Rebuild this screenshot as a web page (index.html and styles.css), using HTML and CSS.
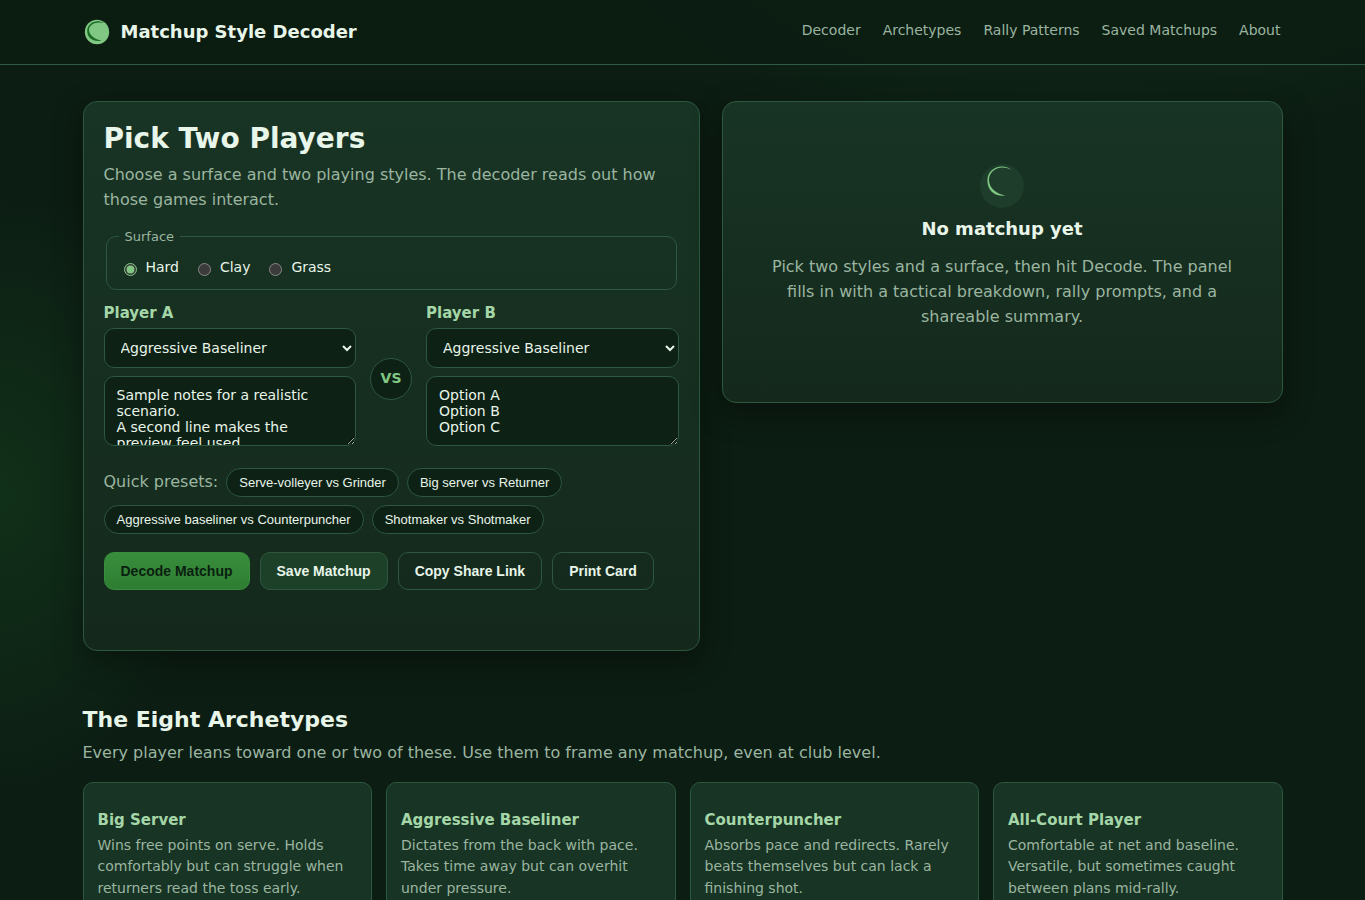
FILE: index.html
```
<!DOCTYPE html>
<html lang="en">
<head>
    <meta charset="UTF-8">
    <meta name="viewport" content="width=device-width, initial-scale=1.0">
    <title>Matchup Style Decoder</title>
    <link rel="stylesheet" href="styles.css">
</head>
<body>

    <header class="site-header">
        <div class="wrap header-inner">
            <a class="brand" href="#">
                <svg class="logo" viewBox="0 0 28 28" aria-hidden="true">
                    <circle cx="14" cy="14" r="12.2" fill="#81c784"/>
                    <path d="M21 5C13 0.500 4.200 5.500 4.200 13C4.200 19.500 10 24.500 18.500 22.700C12 21.500 6.500 17.500 6 12.500C5.600 7 12.500 3 21 5Z" fill="#1b6b25"/>
                </svg>
                <span>Matchup Style Decoder</span>
            </a>
            <nav class="nav">
                <a href="#decoder">Decoder</a>
                <a href="#archetypes">Archetypes</a>
                <a href="#patterns">Rally Patterns</a>
                <a href="#saved">Saved Matchups</a>
                <a href="#about">About</a>
            </nav>
        </div>
    </header>

    <main class="wrap">
        <section class="decoder" id="decoder">
            <div class="card picker">
                <h1>Pick Two Players</h1>
                <p class="muted">Choose a surface and two playing styles. The decoder reads out how those games interact.</p>

                <fieldset class="surface">
                    <legend>Surface</legend>
                    <label><input type="radio" name="surface" checked> Hard</label>
                    <label><input type="radio" name="surface"> Clay</label>
                    <label><input type="radio" name="surface"> Grass</label>
                </fieldset>

                <div class="players">
                    <div class="player">
                        <label for="styleA">Player A</label>
                        <select id="styleA">
                            <option>Aggressive Baseliner</option>
                            <option>Big Server</option>
                            <option>Counterpuncher</option>
                            <option>All-Court Player</option>
                        </select>
                        <textarea id="notesA">Sample notes for a realistic scenario.
A second line makes the preview feel used.</textarea>
                    </div>
                    <div class="vs">VS</div>
                    <div class="player">
                        <label for="styleB">Player B</label>
                        <select id="styleB">
                            <option>Aggressive Baseliner</option>
                            <option>Big Server</option>
                            <option>Counterpuncher</option>
                            <option>All-Court Player</option>
                        </select>
                        <textarea id="notesB">Option A
Option B
Option C</textarea>
                    </div>
                </div>

                <div class="presets">
                    <span class="muted">Quick presets:</span>
                    <button class="chip">Serve-volleyer vs Grinder</button>
                    <button class="chip">Big server vs Returner</button>
                    <button class="chip">Aggressive baseliner vs Counterpuncher</button>
                    <button class="chip">Shotmaker vs Shotmaker</button>
                </div>

                <div class="actions">
                    <button class="btn primary">Decode Matchup</button>
                    <button class="btn secondary">Save Matchup</button>
                    <button class="btn">Copy Share Link</button>
                    <button class="btn">Print Card</button>
                </div>
            </div>

            <div class="card empty">
                <svg class="empty-icon" viewBox="0 0 48 48" aria-hidden="true">
                    <circle cx="24" cy="26" r="22" fill="#1f3d2b"/>
                    <path d="M33.500 10C24 2.500 9.400 8 9.400 20.500C9.400 30 16.500 37.500 27.500 35.300C19 34 11.500 29 11 20.500C10.500 10.500 22 3.500 33.500 10Z" fill="#81c784"/>
                </svg>
                <h3>No matchup yet</h3>
                <p class="muted">Pick two styles and a surface, then hit Decode. The panel fills in with a tactical breakdown, rally prompts, and a shareable summary.</p>
            </div>
        </section>

        <section id="archetypes" class="archetypes">
            <h2>The Eight Archetypes</h2>
            <p class="muted">Every player leans toward one or two of these. Use them to frame any matchup, even at club level.</p>
            <div class="grid">
                <article class="type">
                    <h3>Big Server</h3>
                    <p>Wins free points on serve. Holds comfortably but can struggle when returners read the toss early.</p>
                </article>
                <article class="type">
                    <h3>Aggressive Baseliner</h3>
                    <p>Dictates from the back with pace. Takes time away but can overhit under pressure.</p>
                </article>
                <article class="type">
                    <h3>Counterpuncher</h3>
                    <p>Absorbs pace and redirects. Rarely beats themselves but can lack a finishing shot.</p>
                </article>
                <article class="type">
                    <h3>All-Court Player</h3>
                    <p>Comfortable at net and baseline. Versatile, but sometimes caught between plans mid-rally.</p>
                </article>
            </div>
        </section>
    </main>

</body>
</html>
```
FILE: styles.css
```
:root {
    color-scheme: dark;
    --bg: #0c1d13;
    --field: #0e2115;
    --line: #2d573e;
    --text: #e8f5e9;
    --muted: #9bb5a0;
    --light: #a5d6a7;
    --green: #81c784;
}

* {
    box-sizing: border-box;
}

html {
    background: var(--bg);
}

body {
    margin: 0;
    height: 900px;
    overflow: hidden;
    font-family: "DejaVu Sans", sans-serif;
    font-size: 16px;
    line-height: 1.55;
    color: var(--text);
    background:
        radial-gradient(900px 420px at 80% -10%, rgba(46, 125, 50, 0.16), transparent 60%),
        radial-gradient(300px 450px at 0% 55%, rgba(36, 125, 50, 0.2), transparent 70%),
        var(--bg);
}

.wrap {
    max-width: 1200px;
    margin: 0 auto;
}

h1, h2, h3, p {
    margin: 0;
}

.muted {
    color: var(--muted);
}

.site-header {
    height: 65px;
    border-bottom: 1px solid #305a41;
    background: rgba(12, 28, 18, 0.85);
}

.header-inner {
    display: flex;
    justify-content: space-between;
    align-items: center;
    height: 64px;
}

.brand {
    display: flex;
    align-items: center;
    gap: 10px;
    color: var(--text);
    font-size: 18px;
    font-weight: 700;
    text-decoration: none;
}

.logo {
    width: 28px;
    height: 28px;
}

.nav {
    display: flex;
    gap: 18px;
    font-size: 14px;
}

.nav a {
    padding: 0 2px 2px;
    color: var(--muted);
    text-decoration: none;
}

.decoder {
    display: grid;
    grid-template-columns: 1.1fr 1fr;
    gap: 22px;
    align-items: start;
    padding-top: 36px;
}

.card {
    border: 1px solid var(--line);
    border-radius: 14px;
    background: linear-gradient(180deg, #183424, #14291c);
    box-shadow: 0 10px 30px rgba(0, 0, 0, 0.35);
}

.picker {
    height: 550px;
    padding: 15px 20px;
}

.picker h1 {
    margin-bottom: 2px;
    font-size: 28px;
    line-height: 44px;
}

.surface {
    display: flex;
    gap: 18px;
    margin: 14px 2px 10px;
    padding: 10px 16px 11px;
    border: 1px solid var(--line);
    border-radius: 10px;
}

.surface legend {
    padding: 0 6px;
    margin-left: -4px;
    color: var(--muted);
    font-size: 13px;
}

.surface label {
    font-size: 14px;
}

.surface input {
    margin: 0 4.5px 0 1px;
    vertical-align: -4px;
    accent-color: var(--green);
}

.players {
    display: grid;
    grid-template-columns: 1fr auto 1fr;
    gap: 14px;
    align-items: center;
}

.player label {
    display: block;
    margin: 2px 0;
    color: var(--light);
    font-size: 15px;
    font-weight: 700;
}

.player select,
.player textarea {
    display: block;
    width: 100%;
    border: 1px solid var(--line);
    border-radius: 10px;
    background: var(--field);
    color: var(--text);
    font-family: inherit;
    font-size: 14px;
}

.player select {
    height: 40px;
    padding: 0 12px;
    margin-bottom: 8px;
}

.player textarea {
    height: 70px;
    padding: 10px 12px;
    margin-bottom: 12px;
    line-height: 16px;
    resize: vertical;
    overflow: hidden;
}

.vs {
    display: grid;
    place-items: center;
    width: 42px;
    height: 42px;
    border: 1px solid var(--line);
    border-radius: 50%;
    background: var(--field);
    color: var(--green);
    font-size: 14px;
    font-weight: 700;
}

.presets {
    display: flex;
    flex-wrap: wrap;
    align-items: center;
    gap: 8px;
    margin-top: 10px;
}

.chip {
    height: 29px;
    padding: 0 12px;
    border: 1px solid var(--line);
    border-radius: 999px;
    background: var(--field);
    color: var(--text);
    font-family: "Liberation Sans", Arial, sans-serif;
    font-size: 13px;
}

.actions {
    display: flex;
    gap: 10px;
    margin-top: 18px;
}

.btn {
    height: 38px;
    padding: 0 16px;
    border: 1px solid var(--line);
    border-radius: 10px;
    background: transparent;
    color: var(--text);
    font-family: "Liberation Sans", Arial, sans-serif;
    font-size: 14px;
    font-weight: 700;
}

.btn.primary {
    border-color: #388e3c;
    background: linear-gradient(180deg, #388e3c, #2e7d32);
    color: #0b1f10;
}

.btn.secondary {
    background: #1d4029;
}

.empty {
    height: 302px;
    padding: 58px 40px 0;
    text-align: center;
}

.empty-icon {
    display: block;
    width: 48px;
    height: 48px;
    margin: 0 auto 7px;
}

.empty h3 {
    margin-bottom: 12px;
    font-size: 18px;
    line-height: 28px;
}

.archetypes {
    padding-top: 52px;
}

.archetypes h2 {
    font-size: 22px;
    line-height: 34px;
}

.archetypes > p {
    margin-top: 4px;
}

.grid {
    display: grid;
    grid-template-columns: repeat(4, 1fr);
    gap: 14px;
    margin-top: 16px;
}

.type {
    height: 160px;
    padding: 26px 14px;
    border: 1px solid var(--line);
    border-radius: 10px;
    background: #183424;
}

.type h3 {
    margin-bottom: 2.7px;
    color: var(--light);
    font-size: 15px;
}

.type p {
    color: var(--muted);
    font-size: 14px;
}
```
